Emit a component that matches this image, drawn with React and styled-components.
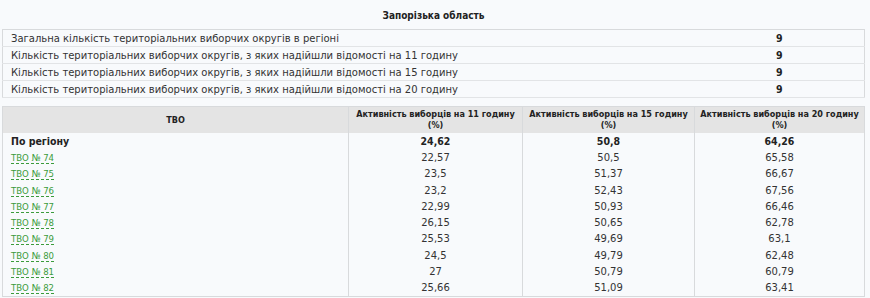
import React from 'react';
import styled, { createGlobalStyle } from 'styled-components';

const GlobalStyle = createGlobalStyle`
  body {
    margin: 0;
    background: #f8fafc;
    font-family: "DejaVu Sans", Verdana, sans-serif;
    font-size: 10px;
    color: #333;
  }
`;

// the original uses a narrow face for bold and links
const narrowFace = `"DejaVu Sans Condensed", "Liberation Sans", Arial, sans-serif`;

const Page = styled.div`
  padding: 0 5px 0 2px;
`;

const Title = styled.h2`
  margin: 0;
  height: 29px;
  line-height: 31px;
  text-align: center;
  font-family: ${narrowFace};
  font-size: 10px;
  font-weight: bold;
  color: #222;
`;

const Table = styled.table`
  width: 100%;
  border-collapse: collapse;
  border: 1px solid #d8dadc;
  margin-bottom: ${p => p.$gap || 0}px;
`;

const Row = styled.tr`
  border-bottom: 1px solid #e2e4e6;
`;

const Cell = styled.td`
  height: ${p => p.$h || 16}px;
  padding: 0 8px;
  text-align: ${p => (p.$center ? 'center' : 'left')};
  font-family: ${p => (p.$bold ? narrowFace : 'inherit')};
  font-size: ${p => (p.$bold ? '10.5px' : '10px')};
  font-weight: ${p => (p.$bold ? 'bold' : 'normal')};
  color: ${p => (p.$bold ? '#222' : '#333')};
  border-left: ${p => (p.$divider ? '1px solid #d8dadc' : 'none')};
  white-space: nowrap;
`;

const Head = styled.th`
  height: 26px;
  padding: 0 2px;
  background: #e4e4e4;
  font-family: ${narrowFace};
  font-size: 9px;
  font-weight: bold;
  text-align: center;
  line-height: 11px;
  color: #222;
  white-space: nowrap;
  border-left: ${p => (p.$divider ? '1px solid #d8dadc' : 'none')};
`;

const DataRow = styled.tr``;

const TvoLink = styled.a`
  color: #3b9b3b;
  font-family: ${narrowFace};
  font-size: 9.5px;
  text-decoration: none;
  border-bottom: 1px dashed #3b9b3b;
`;

const summary = [
  ['Загальна кількість територіальних виборчих округів в регіоні', '9'],
  ['Кількість територіальних виборчих округів, з яких надійшли відомості на 11 годину', '9'],
  ['Кількість територіальних виборчих округів, з яких надійшли відомості на 15 годину', '9'],
  ['Кількість територіальних виборчих округів, з яких надійшли відомості на 20 годину', '9'],
];

const rows = [
  [74, '22,57', '50,5', '65,58'],
  [75, '23,5', '51,37', '66,67'],
  [76, '23,2', '52,43', '67,56'],
  [77, '22,99', '50,93', '66,46'],
  [78, '26,15', '50,65', '62,78'],
  [79, '25,53', '49,69', '63,1'],
  [80, '24,5', '49,79', '62,48'],
  [81, '27', '50,79', '60,79'],
  [82, '25,66', '51,09', '63,41'],
];

const hours = [11, 15, 20];
const rowH = 16.3;

const App = () => (
  <Page>
    <GlobalStyle />
    <Title>Запорізька область</Title>
    <Table $gap={8}>
      <colgroup>
        <col style={{ width: 692 }} />
        <col />
      </colgroup>
      <tbody>
        {summary.map(([label, value]) => (
          <Row key={label}>
            <Cell>{label}</Cell>
            <Cell $center $bold>{value}</Cell>
          </Row>
        ))}
      </tbody>
    </Table>
    <Table>
      <colgroup>
        <col style={{ width: 346 }} />
        <col style={{ width: 174 }} />
        <col style={{ width: 172 }} />
        <col />
      </colgroup>
      <thead>
        <tr>
          <Head>ТВО</Head>
          {hours.map(h => (
            <Head key={h} $divider>
              Активність виборців на {h} годину
              <br />
              (%)
            </Head>
          ))}
        </tr>
      </thead>
      <tbody>
        <DataRow>
          <Cell $h={rowH} $bold>По регіону</Cell>
          <Cell $h={rowH} $center $bold $divider>24,62</Cell>
          <Cell $h={rowH} $center $bold $divider>50,8</Cell>
          <Cell $h={rowH} $center $bold $divider>64,26</Cell>
        </DataRow>
        {rows.map(([n, a, b, c]) => (
          <DataRow key={n}>
            <Cell $h={rowH}><TvoLink href="#">ТВО № {n}</TvoLink></Cell>
            <Cell $h={rowH} $center $divider>{a}</Cell>
            <Cell $h={rowH} $center $divider>{b}</Cell>
            <Cell $h={rowH} $center $divider>{c}</Cell>
          </DataRow>
        ))}
      </tbody>
    </Table>
  </Page>
);

export default App;
